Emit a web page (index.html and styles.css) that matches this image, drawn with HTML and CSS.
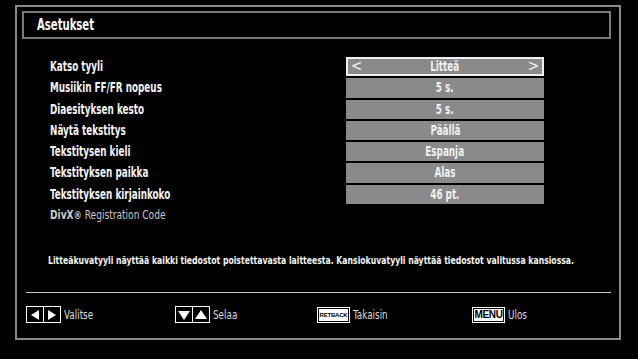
FILE: index.html
```html
<!DOCTYPE html>
<html>
<head>
<meta charset="utf-8">
<link rel="stylesheet" href="styles.css">
</head>
<body>
<div class="frame">
  <div class="title"><span class="t">Asetukset</span></div>
  <div class="settings">
    <div class="label"><span class="t">Katso tyyli</span></div>
    <div class="value selected"><span class="arr">&lt;</span><span class="t">Litteä</span><span class="arr">&gt;</span></div>
    <div class="label"><span class="t">Musiikin FF/FR nopeus</span></div>
    <div class="value"><span class="t">5 s.</span></div>
    <div class="label"><span class="t">Diaesityksen kesto</span></div>
    <div class="value"><span class="t">5 s.</span></div>
    <div class="label"><span class="t">Näytä tekstitys</span></div>
    <div class="value"><span class="t">Päällä</span></div>
    <div class="label"><span class="t">Tekstitysen kieli</span></div>
    <div class="value"><span class="t">Espanja</span></div>
    <div class="label"><span class="t">Tekstityksen paikka</span></div>
    <div class="value"><span class="t">Alas</span></div>
    <div class="label"><span class="t">Tekstityksen kirjainkoko</span></div>
    <div class="value"><span class="t">46 pt.</span></div>
    <div class="label divx"><span class="t"><span class="divx-logo">DivX<span class="reg">®</span></span> Registration Code</span></div>
  </div>
  <p class="desc"><span class="t">Litteäkuvatyyli näyttää kaikki tiedostot poistettavasta laitteesta. Kansiokuvatyyli näyttää tiedostot valitussa kansiossa.</span></p>
  <div class="sep"></div>
  <div class="footer">
    <div class="item">
      <span class="keys">
        <span class="cell"><svg width="12" height="12" viewBox="0 0 12 12"><polygon points="10,1 10,11 2,6" fill="#fff"/></svg></span>
        <span class="cell"><svg width="12" height="12" viewBox="0 0 12 12"><polygon points="2,1 2,11 10,6" fill="#fff"/></svg></span>
      </span>
      <span class="ftext"><span class="t">Valitse</span></span>
    </div>
    <div class="item">
      <span class="keys">
        <span class="cell"><svg width="14" height="12" viewBox="0 0 14 12"><polygon points="1,2 13,2 7,11" fill="#fff"/></svg></span>
        <span class="cell"><svg width="14" height="12" viewBox="0 0 14 12"><polygon points="1,10 13,10 7,1" fill="#fff"/></svg></span>
      </span>
      <span class="ftext"><span class="t">Selaa</span></span>
    </div>
    <div class="item">
      <span class="btn small">RETBACK</span>
      <span class="ftext"><span class="t">Takaisin</span></span>
    </div>
    <div class="item">
      <span class="btn">MENU</span>
      <span class="ftext"><span class="t">Ulos</span></span>
    </div>
  </div>
</div>
</body>
</html>
```
FILE: styles.css
```css
html, body {
  margin: 0;
  padding: 0;
  background: #000;
}
body {
  width: 638px;
  height: 359px;
  overflow: hidden;
  font-family: "DejaVu Sans Condensed", "DejaVu Sans", sans-serif;
  color: #fff;
}
.t {
  display: inline-block;
  white-space: nowrap;
  transform: scaleX(0.7);
  transform-origin: 0 50%;
}
.frame {
  box-sizing: border-box;
  margin: 5px 0 0 15px;
  width: 606px;
  height: 335px;
  border: 2px solid #8a8a8a;
  padding: 4px 8px 0 5px;
  overflow: hidden;
}
.title {
  box-sizing: border-box;
  height: 28px;
  border: 2px solid #7a7a7a;
  padding-left: 13px;
  font-size: 16px;
  font-weight: bold;
  line-height: 24px;
}
.settings {
  display: grid;
  grid-template-columns: 296px 198px;
  grid-auto-rows: 19.3px;
  row-gap: 2px;
  margin-top: 18px;
  padding-left: 28px;
  font-size: 14px;
  font-weight: bold;
}
.label {
  line-height: 19px;
  color: #f4f4f4;
  white-space: nowrap;
  overflow: hidden;
}
.value {
  box-sizing: border-box;
  background: #8a8a8a;
  text-align: center;
  line-height: 19px;
  color: #f2f2f2;
}
.value .t {
  transform-origin: 50% 50%;
}
.value.selected {
  border: 2px solid #f0f0f0;
  line-height: 15px;
  display: flex;
  justify-content: space-between;
  padding: 0 3px;
}
.arr {
  font-weight: normal;
  font-size: 15px;
}
.label.divx {
  font-weight: normal;
  color: #c8c8c8;
  font-size: 12px;
}
.label.divx .t {
  transform: scaleX(0.84);
}
.divx-logo {
  font-weight: bold;
  color: #cfcfcf;
}
.reg {
  font-size: 11px;
}
.desc {
  margin: 29px 0 0 26px;
  font-size: 11px;
  font-weight: bold;
  color: #f4f4f4;
  line-height: 14px;
  white-space: nowrap;
  overflow: hidden;
}
.desc .t {
  transform: scaleX(0.78);
}
.sep {
  margin: 24px 0 0 4px;
  height: 1px;
  background: #c8c8c8;
}
.footer {
  display: grid;
  grid-template-columns: 149px 142px 155px auto;
  margin: 13px 0 0 4px;
}
.item {
  display: flex;
  align-items: center;
  gap: 3px;
}
.keys {
  display: flex;
  border: 1px solid #fff;
  background: #fff;
  gap: 1px;
  height: 15px;
}
.cell {
  width: 16px;
  height: 15px;
  background: #000;
  display: flex;
  align-items: center;
  justify-content: center;
}
.btn {
  box-sizing: border-box;
  width: 33px;
  height: 16px;
  border: 1px solid #fff;
  outline: 1px solid #000;
  outline-offset: -2px;
  background: #fff;
  color: #000;
  font-family: "Liberation Sans", sans-serif;
  font-weight: bold;
  font-size: 10px;
  line-height: 14px;
  text-align: center;
  letter-spacing: -0.3px;
}
.btn.small {
  font-size: 6px;
  letter-spacing: -0.2px;
}
.ftext {
  font-size: 12px;
  color: #dcdcdc;
}
.ftext .t {
  transform: scaleX(0.82);
}
```
